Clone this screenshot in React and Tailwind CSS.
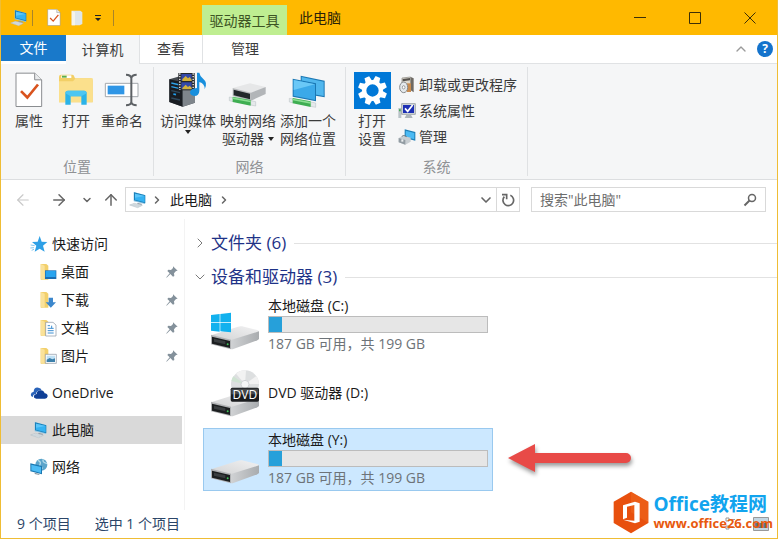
import { ArrowLeft, ArrowRight, ArrowUp, ChevronDown, ChevronRight, ChevronUp } from "lucide-react";

function PcIcon({ size = 18 }) {
  return (
    <svg width={size} height={size} viewBox="0 0 54 54" className="shrink-0">
      <path d="M14 3 48 12v27L14 31z" fill="#8cc4e4" />
      <path d="M15 4 49 13v24L15 28z" fill="#1c80b8" />
      <path d="M18 8 47 15v19L18 26z" fill="#35b2f2" />
      <path d="M18 8 47 15 18 20z" fill="#5cc6fa" />
      <path d="M26 36 38 38v4l-14-2z" fill="#8d99a3" />
      <path d="M2 42 16 37 40 43 26 50z" fill="#dfe6ea" stroke="#aab6be" strokeWidth="1.5" />
      <path d="M8 42l22 5M13 40l22 5" stroke="#b8c4cb" strokeWidth="1.5" />
    </svg>
  );
}

function CheckPageIcon({ width = 28, height = 36 }) {
  return (
    <svg width={width} height={height} viewBox="0 0 84 105">
      <path d="M3 2h56l21 20v80H3z" fill="#fff" stroke="#8a8d90" strokeWidth="3" />
      <path d="M59 2v20h21" fill="#e9ebec" stroke="#8a8d90" strokeWidth="3" />
      <path d="M18 56l19 19 32-39" fill="none" stroke="#d9531e" strokeWidth="8" />
    </svg>
  );
}

function OpenFolderIcon() {
  return (
    <svg width="36" height="36" viewBox="0 0 108 108">
      <path d="M3 14q0-6 6-6h34q5 0 6 6l2 5h48q5 0 5 6v66H3z" fill="#f2cf66" />
      <path d="M10 10h30v8H10z" fill="#fff" />
      <path d="M12 11h14v6H12z" fill="#5cae48" />
      <path d="M3 28h42l8-9h51v72H3z" fill="#fbe08c" />
      <path d="M22 98V64q0-8 8-8h48q8 0 8 8v34H70V73H38v25z" fill="#2bb3e8" />
      <path d="M22 64q0-8 8-8h48q8 0 8 8l-16 9H38z" fill="#4cc6f2" />
    </svg>
  );
}

function RenameIcon() {
  return (
    <svg width="36" height="36" viewBox="0 0 108 108">
      <path d="M4 34h98v40H4z" fill="#fff" stroke="#a3a8ac" strokeWidth="3" />
      <path d="M11 41h50v26H11z" fill="#2f96e6" />
      <path d="M66 8q14 0 16 10 2-10 16-10M82 16v78M66 100q14 0 16-9 2 9 16 9" fill="none" stroke="#5d6165" strokeWidth="6" />
    </svg>
  );
}

function MediaServerIcon() {
  return (
    <svg width="40" height="36" viewBox="0 0 120 108">
      <path d="M4 22 38 12l43 8v72L44 104 4 90z" fill="#454a50" />
      <path d="M4 22 44 31v73L4 90z" fill="#191d22" />
      <path d="M44 31 81 20v72l-37 12z" fill="#7e858b" />
      <path d="M10 33l26 6M10 44l26 6" stroke="#2da2e8" strokeWidth="4" />
      <path d="M10 56l26 6M10 78l26 6" stroke="#30495c" strokeWidth="4" />
      <path d="M16 66l8 2" stroke="#1fa0f0" strokeWidth="5" />
      <path d="M31 3h49v52H31z" fill="#24272b" />
      <path d="M40 6h31v21H40zM40 31h31v21H40z" fill="#3348a8" />
      <path d="M43 22l10-10 7 7 5-4 6 8v4H43zM43 48l10-10 7 7 5-4 6 6v5H43z" fill="#d2b13b" />
      <path d="M35.500 4v50M75.500 4v50" stroke="#f1f1f1" strokeWidth="4" strokeDasharray="4 4" />
      <path d="M87 2h7q2 12 12 19 14 10 4 31 1-17-16-22v27q-1 15-15 15-13-1-13-11 2-12 21-13z" fill="#188fdd" />
    </svg>
  );
}

function NetPipe({ y }) {
  return (
    <g transform={`translate(0 ${y})`}>
      <path d="M4 2l12 2v12L4 13zM68 13l15 3v13l-15-3z" fill="#e5e9eb" stroke="#b5bcc0" strokeWidth="1.500" />
      <path d="M14 1 68 11v17L14 17z" fill="#3fae52" />
      <path d="M14 3 68 13v5L14 8z" fill="#8bdf92" />
    </g>
  );
}

function MapDriveIcon() {
  return (
    <svg width="40" height="36" viewBox="0 0 120 108">
      <path d="M14 48 66 34l47 11-44 19z" fill="#e6e7e8" />
      <path d="M69 62l44-17v21L69 86z" fill="#b2b5b8" />
      <path d="M14 48l55 14v24L14 72z" fill="#b9bbbd" />
      <path d="M17 53l49 12v17L17 70z" fill="#22272a" />
      <NetPipe y={73} />
    </svg>
  );
}

function NetPlaceIcon() {
  return (
    <svg width="40" height="36" viewBox="0 0 120 108">
      <path d="M38 11 110 26v50L38 64z" fill="#1b78b4" />
      <path d="M41 15 107 29v43L41 60z" fill="#50b7ee" />
      <path d="M14 20 84 34v54L14 74z" fill="#1b78b4" />
      <path d="M17 24 81 37v47L17 71z" fill="#3ba9e9" />
      <path d="M17 24 81 37 17 54z" fill="#6ac8f7" />
      <NetPipe y={77} />
    </svg>
  );
}

function SettingsTile() {
  const teeth = [22, 67, 112, 157, 202, 247, 292, 337];
  return (
    <svg width="37" height="37" viewBox="0 0 111 111">
      <path d="M0 0h111v111H0z" fill="#0078d7" />
      {teeth.map((a) => (
        <path key={a} d="M45 30l3-18h15l3 18z" fill="#fff" transform={`rotate(${a} 55.5 55.5)`} />
      ))}
      <circle cx="55.500" cy="55.500" r="25" fill="none" stroke="#fff" strokeWidth="13" />
    </svg>
  );
}

function UninstallIcon() {
  return (
    <svg width="18" height="18" viewBox="0 0 54 54">
      <path d="M12 6 38 3v36l-26 3z" fill="#ddd9cf" stroke="#84817a" strokeWidth="2" />
      <path d="M38 3l9 4v42l-9-6z" fill="#6e6a64" />
      <path d="M14 9l22-3v7l-22 3z" fill="#55524d" />
      <path d="M26 22h13v26H26z" fill="#c98b4d" />
      <ellipse cx="17" cy="34" rx="12" ry="16" fill="#e4e9ec" stroke="#85898c" strokeWidth="3" />
      <ellipse cx="17" cy="34" rx="4" ry="5" fill="#fff" stroke="#777" strokeWidth="2" />
    </svg>
  );
}

function SystemIcon() {
  return (
    <svg width="18" height="18" viewBox="0 0 54 54">
      <path d="M1 18h9v30H1z" fill="#b9c3c8" />
      <path d="M3 22h5v6H3z" fill="#40a852" />
      <path d="M11 5h41v32H11z" fill="#d5dade" stroke="#7d868c" strokeWidth="2" />
      <path d="M15 9h33v24H15z" fill="#1c2fb4" />
      <path d="M21 19l8 9 15-19" fill="none" stroke="#fff" strokeWidth="5" />
      <path d="M26 37h12l6 11H20z" fill="#aeb6ba" />
    </svg>
  );
}

function ManageIcon() {
  return (
    <svg width="18" height="18" viewBox="0 0 54 54">
      <path d="M20 4 52 12v26l-32-8z" fill="#1d7db5" />
      <path d="M23 8 49 15v19l-26-7z" fill="#4bbaf3" />
      <path d="M2 30 16 23l22 6v12L22 50 2 43z" fill="#c8ced2" />
      <path d="M2 30l20 6v14L2 43z" fill="#929ca3" />
      <path d="M12 26q2-7 14 0" fill="none" stroke="#6c757b" strokeWidth="3" />
      <path d="M10 34h6v7h-6z" fill="#eef1f2" />
    </svg>
  );
}

function RefreshIcon() {
  return (
    <svg width="14" height="14" viewBox="0 0 42 42">
      <path d="M28 7a16 16 0 1 1-18 4" fill="none" stroke="#666" strokeWidth="5" />
      <path d="M3 5h14v14" fill="none" stroke="#666" strokeWidth="5" />
    </svg>
  );
}

function StarIcon() {
  return (
    <svg width="18" height="18" viewBox="0 0 54 54">
      <path d="M29 3l6 17 17 1-13 11 5 18-15-9-15 9 5-18L6 21l17-1z" fill="#2ea0e6" />
      <path d="M2 30l12 2M1 39l11-1M5 46l7-3" stroke="#86c8ee" strokeWidth="3" />
    </svg>
  );
}

function FolderIcon({ kind }) {
  return (
    <svg width="18" height="18" viewBox="0 0 54 54">
      <path d="M5 3h17l6 5v42H5z" fill="#f2d06c" />
      <path d="M5 3l12 5v43L5 47z" fill="#fae29a" />
      {kind === "desktop" && (
        <>
          <path d="M18 22h34v26H18z" fill="#1b6db2" />
          <path d="M20 24h30v18H20z" fill="#28a4ef" />
        </>
      )}
      {kind === "download" && <path d="M29 20h13v14h9L35.500 50 20 34h9z" fill="#3c87cc" />}
      {kind === "document" && (
        <>
          <path d="M20 10h22l9 8v33H20z" fill="#fff" stroke="#8793a0" strokeWidth="2" />
          <path d="M26 20h7M26 28h18M26 35h18M26 42h18M38 20v8" stroke="#3d8fd2" strokeWidth="3" />
        </>
      )}
      {kind === "picture" && (
        <>
          <path d="M19 22h33v27H19z" fill="#fff" stroke="#8793a0" strokeWidth="2" />
          <path d="M23 26h25v19H23z" fill="#c0e1f5" />
          <path d="M23 38l9-5 8 4 8-3v11H23z" fill="#3c80ab" />
        </>
      )}
    </svg>
  );
}

function PinIcon() {
  return (
    <svg width="12" height="12" viewBox="0 0 36 36">
      <path d="M21 1l14 13-5 1-6 7 1 8-4 2-8-8L2 35l-1-1 10-12-7-7 3-4 8 1 6-6z" fill="#84919b" />
    </svg>
  );
}

function OneDriveIcon() {
  return (
    <svg width="18" height="18" viewBox="0 0 54 54">
      <path d="M4 37q-5-11 7-14Q12 9 25 11q8 1 10 8-15-1-17 11-10 1-9 9z" fill="#2a63b9" />
      <path d="M19 44q-9-2-7-9 2-5 8-5 1-11 12-11 9 0 12 9 9 1 9 9-1 7-8 7z" fill="#0f3f96" />
    </svg>
  );
}

function NetworkIcon() {
  return (
    <svg width="18" height="18" viewBox="0 0 54 54">
      <circle cx="34" cy="20" r="18" fill="#5ba4ca" />
      <path d="M24 7q10 5 6 12t8 12M40 4q-5 9 11 13" fill="none" stroke="#b5dceb" strokeWidth="4" />
      <path d="M1 16 36 24v25L1 40z" fill="#1a78b2" />
      <path d="M4 20 33 27v18L4 37z" fill="#4cbcf5" />
      <path d="M14 44l14 4v3l-14-3z" fill="#8797a2" />
    </svg>
  );
}

function DriveIcon({ kind }) {
  return (
    <svg width="50" height="48" viewBox="0 0 150 144" className="shrink-0">
      <defs>
        <linearGradient id={`top-${kind}`} x1="0" y1="1" x2="1" y2="0">
          <stop offset="0" stopColor="#d2d3d4" />
          <stop offset="1" stopColor="#f1f1f2" />
        </linearGradient>
        <linearGradient id={`side-${kind}`} x1="0" y1="0" x2="1" y2="0">
          <stop offset="0" stopColor="#d0d2d4" />
          <stop offset="1" stopColor="#a9acaf" />
        </linearGradient>
      </defs>
      <path d="M3 100 84 74q6-2 12-1l46 11q5 2 5 6L63 116z" fill={`url(#top-${kind})`} />
      <path d="M63 114l84-26v21q0 4-5 6l-74 27H63z" fill={`url(#side-${kind})`} />
      <path d="M3 98l60 15v29L3 127z" fill="#b0b2b4" />
      <path d="M6 104l54 13v21L6 125z" fill="#1c1f20" />
      <path d="M12 110l34 8v9l-34-8z" fill="#3a3e40" />
      <circle cx="53" cy="127" r="3" fill="#41c35a" />
      {kind === "system" && (
        <g fill="#12b1ee">
          <path d="M3 39l26-3v25H3zM31 36l32-4v29H31zM3 63h26v26L3 86zM31 63h32v28l-32-3z" />
        </g>
      )}
      {kind === "dvd" && (
        <>
          <circle cx="105" cy="46" r="42" fill="#dddfe0" />
          <path d="M105 46 78 14a42 42 0 0 1 30-10zM105 46l34-25a42 42 0 0 1 8 24z" fill="#f2f2f2" />
          <path d="M105 46 64 36a42 42 0 0 1 6-14z" fill="#cfe3d2" />
          <circle cx="105" cy="46" r="12" fill="#f5f6f6" stroke="#c0c3c5" strokeWidth="2" />
          <rect x="62" y="56" width="85" height="42" rx="5" fill="#1b1d1f" />
          <path d="M64 59h81v17H64z" fill="#45484a" />
          <text x="104.500" y="89" textAnchor="middle" fontSize="36" fill="#fff">DVD</text>
        </>
      )}
    </svg>
  );
}

function BigButton({ icon, lines, caret, width }) {
  return (
    <button className={`flex flex-col items-center text-[14px] leading-[18px] text-[#3b3b3b] ${width}`}>
      <span className="flex h-[40px] items-start">{icon}</span>
      {lines.map((line, i) => (
        <span key={line} className="flex items-center whitespace-nowrap">
          {line}
          {caret && i === 1 && <Caret className="ml-1" />}
        </span>
      ))}
      {caret && lines.length === 1 && <Caret />}
    </button>
  );
}

function Caret({ className = "" }) {
  return (
    <svg width="6" height="4" viewBox="0 0 6 4" className={className}>
      <path d="M0 0h6L3 4z" fill="#222" />
    </svg>
  );
}

function RibbonGroup({ title, children, className = "" }) {
  return (
    <section className={`flex flex-col justify-between border-r border-[#dfe1e3] pt-[5px] ${className}`}>
      <div className="flex pl-1">{children}</div>
      <h2 className="text-center text-[14px] leading-[18px] text-[#8f9194]">{title}</h2>
    </section>
  );
}

function NavItem({ icon, label, nested, pinned, active, className = "" }) {
  return (
    <a
      href="#"
      className={`flex h-7 items-center gap-1 pr-1 text-[14px] leading-[20px] text-[#1a1a1a] ${nested ? "pl-[38px]" : "pl-[29px]"} ${active ? "bg-[#d9d9d9]" : ""} ${className}`}
    >
      {icon}
      <span className="flex-1">{label}</span>
      {pinned && <PinIcon />}
    </a>
  );
}

function GroupHeader({ label, open }) {
  const Chevron = open ? ChevronDown : ChevronRight;
  return (
    <button className="flex h-[34px] w-full items-center text-left text-[17px] leading-[24px] text-[#1e3287]">
      <Chevron size={16} strokeWidth={1.5} className="mr-[3px] text-[#7a7a7a]" />
      {label}
      <span className="ml-2 h-px flex-1 bg-[#e2e2e2]" />
    </button>
  );
}

function Drive({ kind, name, used, info, selected }) {
  return (
    <div className={`flex h-[63px] w-[290px] items-center gap-2 border pl-[6px] ${selected ? "border-[#99c9ef] bg-[#cce8ff]" : "border-transparent"}`}>
      <DriveIcon kind={kind} />
      <div className="text-[14px]">
        <div className="leading-[20px] text-[#1a1a1a]">{name}</div>
        {info && (
          <>
            <div role="progressbar" aria-label={name} aria-valuenow={used} className="h-[17px] w-[220px] border border-[#bcbcbc] bg-[#e6e6e6]">
              <div className="h-full bg-[#26a0da]" style={{ width: `${used}%` }} />
            </div>
            <div className="leading-[22px] text-[#6d7378]">{info}</div>
          </>
        )}
      </div>
    </div>
  );
}

function Watermark() {
  return (
    <div className="absolute right-1 bottom-1 flex items-center gap-1">
      <svg width="36" height="43" viewBox="0 0 108 129">
        <path d="M54 2l52 30v64l-52 31L2 96V32z" fill="#e8500e" />
        <path d="M54 2l52 30v64L54 64z" fill="#f06a1f" opacity=".5" />
        <path d="M30 43l36-11 14 5v55l-14 5-36-11 34 3V42l-22 5v33l-12 5z" fill="#fff" />
      </svg>
      <div className="font-bold">
        <div className="text-[19px] leading-[20px] text-[#12a4ee]">Office教程网</div>
        <div className="text-[13px] leading-[18px] text-[#e8590e]">www.office26.com</div>
      </div>
    </div>
  );
}

export default function App() {
  return (
    <div className="relative flex min-h-screen flex-col border-x border-b border-[#efbd35] bg-white font-['Open_Sans','Noto_Sans_CJK_SC',sans-serif]">
      <header className="flex h-[35px] items-center bg-[#ffb900]">
        <div className="flex w-[201px] items-center pl-[9px]">
          <PcIcon />
          <span className="ml-1 h-4 w-px bg-[#a8842a]" />
          <button aria-label="属性" className="ml-[14px]"><CheckPageIcon width={14} height={17} /></button>
          <button aria-label="新建文件夹" className="ml-[10px]">
            <svg width="12" height="16" viewBox="0 0 36 48">
              <path d="M2 2h26l6 5v35l-8 4H2z" fill="#dfe6e9" />
              <path d="M2 2l10 5v39H2z" fill="#f5f4ea" />
            </svg>
          </button>
          <button aria-label="自定义" className="ml-3">
            <svg width="6" height="6" viewBox="0 0 6 6"><path d="M0 0h6v1H0zM0 3h6L3 6z" fill="#222" /></svg>
          </button>
          <span className="ml-[12px] h-4 w-px bg-[#a8842a]" />
        </div>
        <div className="flex h-[30px] w-[85px] items-center justify-center self-end bg-[#bfee91] text-[14px] text-[#3d5424]">驱动器工具</div>
        <h1 className="ml-3 flex-1 text-[14px] text-[#2a2108]">此电脑</h1>
        <button aria-label="最小化" className="flex w-[55px] justify-center">
          <svg width="12" height="12"><path d="M0 5.500h12" stroke="#3c2f08" /></svg>
        </button>
        <button aria-label="最大化" className="flex w-[55px] justify-center">
          <svg width="12" height="12"><path d="M.5.500h11v11H.5z" fill="none" stroke="#3c2f08" /></svg>
        </button>
        <button aria-label="关闭" className="flex w-[55px] justify-center">
          <svg width="12" height="12"><path d="M.5.500l11 11M11.500.500l-11 11" stroke="#3c2f08" /></svg>
        </button>
      </header>

      <nav className="flex h-[29px] text-[14px] leading-[20px] text-[#3b3b3b]">
        <button className="h-[26px] w-[65px] bg-[#1979ca] text-white">文件</button>
        <button className="w-[73px] bg-[#f5f6f7]">计算机</button>
        <button className="w-[63px] border-b border-l border-[#e0e2e4]">查看</button>
        <button className="w-[85px] border-b border-l border-[#e0e2e4]">管理</button>
        <div className="flex flex-1 items-center justify-end gap-2 border-b border-[#e0e2e4] pr-1">
          <button aria-label="折叠功能区"><ChevronUp size={16} strokeWidth={2} className="text-[#9a9a9a]" /></button>
          <button aria-label="帮助" className="flex size-4 items-center justify-center rounded-full bg-[#1473cc] text-[12px] font-bold text-white">?</button>
        </div>
      </nav>

      <div className="flex h-[116px] border-b border-[#dcdee0] bg-[#f5f6f7] py-[3px]">
        <RibbonGroup title="位置" className="w-[153px]">
          <BigButton width="w-[48px]" icon={<CheckPageIcon />} lines={["属性"]} />
          <BigButton width="w-[46px]" icon={<OpenFolderIcon />} lines={["打开"]} />
          <BigButton width="w-[46px]" icon={<RenameIcon />} lines={["重命名"]} />
        </RibbonGroup>
        <RibbonGroup title="网络" className="w-[192px]">
          <BigButton width="w-[60px]" icon={<MediaServerIcon />} lines={["访问媒体"]} caret />
          <BigButton width="w-[60px]" icon={<MapDriveIcon />} lines={["映射网络", "驱动器"]} caret />
          <BigButton width="w-[60px]" icon={<NetPlaceIcon />} lines={["添加一个", "网络位置"]} />
        </RibbonGroup>
        <RibbonGroup title="系统" className="w-[182px]">
          <BigButton width="w-[44px]" icon={<SettingsTile />} lines={["打开", "设置"]} />
          <div className="ml-1 flex flex-col text-[14px] leading-[18px] text-[#3b3b3b]">
            <button className="flex h-[26px] items-center gap-[3px]"><UninstallIcon />卸载或更改程序</button>
            <button className="flex h-[26px] items-center gap-[3px]"><SystemIcon />系统属性</button>
            <button className="flex h-[26px] items-center gap-[3px]"><ManageIcon />管理</button>
          </div>
        </RibbonGroup>
      </div>

      <div className="flex h-[39px] items-center text-[14px] leading-[20px] text-[#666]">
        <button aria-label="后退" className="ml-[13px]"><ArrowLeft size={18} strokeWidth={1.5} className="text-[#c8c8c8]" /></button>
        <button aria-label="前进" className="ml-[18px]"><ArrowRight size={18} strokeWidth={2} /></button>
        <button aria-label="最近位置" className="ml-[13px]"><ChevronDown size={12} strokeWidth={3} /></button>
        <button aria-label="上移" className="ml-[9px]"><ArrowUp size={18} strokeWidth={2} /></button>
        <div className="ml-[5px] flex h-[25px] flex-1 items-center border border-[#d9d9d9] pl-[3px]">
          <PcIcon />
          <ChevronRight size={12} strokeWidth={3} className="ml-1" />
          <span className="ml-[7px] text-[#1a1a1a]">此电脑</span>
          <ChevronRight size={12} strokeWidth={3} className="ml-[6px]" />
          <button aria-label="历史" className="mr-[2px] ml-auto"><ChevronDown size={16} strokeWidth={2.5} /></button>
          <button aria-label="刷新" className="flex h-full w-[23px] items-center justify-center border-l border-[#d9d9d9]"><RefreshIcon /></button>
        </div>
        <label className="mr-[11px] ml-[11px] flex h-[25px] w-[235px] items-center border border-[#d9d9d9] px-2">
          <input type="search" aria-label="搜索" placeholder={'搜索"此电脑"'} className="min-w-0 flex-1 outline-none placeholder:text-[#6d6d6d]" />
          <svg width="14" height="14" viewBox="0 0 14 14">
            <circle cx="9" cy="5" r="3.500" fill="none" stroke="#666" strokeWidth="1.500" />
            <path d="M6.500 7.500l-5 5" stroke="#666" strokeWidth="2" />
          </svg>
        </label>
      </div>

      <main className="flex flex-1">
        <aside className="w-[184px] border-r border-[#f3f3f3] pt-[11px] pr-[2px]">
          <NavItem icon={<StarIcon />} label="快速访问" />
          <NavItem nested pinned icon={<FolderIcon kind="desktop" />} label="桌面" />
          <NavItem nested pinned icon={<FolderIcon kind="download" />} label="下载" />
          <NavItem nested pinned icon={<FolderIcon kind="document" />} label="文档" />
          <NavItem nested pinned icon={<FolderIcon kind="picture" />} label="图片" />
          <NavItem className="mt-[9px]" icon={<OneDriveIcon />} label="OneDrive" />
          <NavItem className="mt-[9px]" active icon={<PcIcon />} label="此电脑" />
          <NavItem className="mt-[9px]" icon={<NetworkIcon />} label="网络" />
        </aside>
        <div className="relative flex-1 pt-[7px] pl-[7px]">
          <GroupHeader label="文件夹 (6)" />
          <GroupHeader open label="设备和驱动器 (3)" />
          <div className="ml-[11px] flex flex-col gap-1">
            <Drive kind="system" name="本地磁盘 (C:)" used={6} info="187 GB 可用，共 199 GB" />
            <Drive kind="dvd" name="DVD 驱动器 (D:)" />
            <Drive kind="local" name="本地磁盘 (Y:)" used={6} info="187 GB 可用，共 199 GB" selected />
          </div>
          <svg width="128" height="34" viewBox="0 0 128 34" className="absolute top-[223px] left-[322px] drop-shadow-[1px_3px_2px_rgba(0,0,0,0.4)]">
            <path d="M1 16 28 2v9h91a5 5 0 0 1 0 10H28v9z" fill="#e84a47" />
          </svg>
        </div>
      </main>

      <footer className="flex h-7 items-center gap-6 pl-4 text-[14px] leading-[20px] text-[#2b4568]">
        <span>9 个项目</span>
        <span>选中 1 个项目</span>
        <span className="mr-2 ml-auto flex items-center gap-3">
          <svg width="16" height="14"><path d="M1 1h3v3H1zM1 9h3v3H1zM7 2.500h3M12 2.500h4M7 10.500h3M12 10.500h4" fill="none" stroke="#999" /></svg>
          <svg width="16" height="14"><path d="M.5.500h15v13H.5z" fill="#c3d6e2" stroke="#999" /><path d="M2 6h12v5H2z" fill="#5d7688" /></svg>
        </span>
      </footer>
      <Watermark />
    </div>
  );
}
